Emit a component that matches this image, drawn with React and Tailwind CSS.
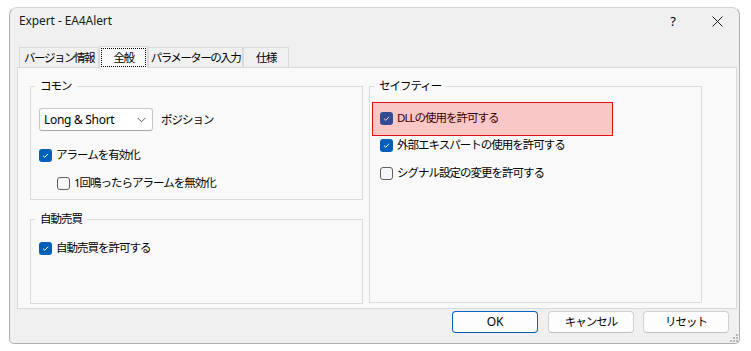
import React from "react";

const FONT = "font-['Noto_Sans','Noto_Sans_CJK_JP',sans-serif] tracking-[-1px]";

function Check({ checked }) {
  if (checked) {
    return (
      <span className="w-[13px] h-[13px] rounded-[3px] bg-[#005fb8] flex items-center justify-center shrink-0">
        <svg width="9" height="9" viewBox="0 0 9 9">
          <path d="M2 4.6 L3.8 6.3 L7 2.8" stroke="white" strokeWidth="1" fill="none" />
        </svg>
      </span>
    );
  }
  return <span className="w-[13px] h-[13px] rounded-[3px] border border-[#5f5f5f] bg-[#f7f7f7] shrink-0" />;
}

function Row({ checked, children, className = "" }) {
  return (
    <div className={"flex items-center h-[16px] gap-[4px] " + className}>
      <Check checked={checked} />
      <span className="leading-[16px] whitespace-nowrap">{children}</span>
    </div>
  );
}

function Tab({ children, selected, w }) {
  if (selected) {
    return (
      <div className={"relative z-10 h-[22px] -mb-px bg-[#f9f9f9] border border-b-0 border-[#d9d9d9] flex p-[1px] " + w}>
        <div className="flex-1 border border-dotted border-black flex items-center justify-center leading-[16px] whitespace-nowrap tracking-[-1.5px]">
          {children}
        </div>
      </div>
    );
  }
  return (
    <div className={"h-[20px] bg-[#f0f0f0] border border-b-0 border-[#dadada] flex items-center justify-center leading-[16px] whitespace-nowrap tracking-[-1.5px] " + w}>
      {children}
    </div>
  );
}

function Button({ children, primary }) {
  return (
    <div
      className={
        "w-[86px] h-[22px] rounded-[4px] bg-[#fdfdfd] flex items-center justify-center leading-[16px] " +
        (primary ? "border border-[#0067c0] border-b-[#0058a8]" : "border border-[#d0d0d0] border-b-[#c0c0c0]")
      }
    >
      {children}
    </div>
  );
}

export default function App() {
  return (
    <div className={"w-[751px] h-[351px] bg-white pt-[7px] pl-[9px] text-[11.5px] text-black " + FONT}>
      <div className="relative w-[731px] h-[337px] bg-[#f0f0f0] border border-[#b0b0b0] border-t-[#d4d4d4] rounded-t-[8px] rounded-b-[5px] flex flex-col">
        {/* title bar */}
        <div className="h-[26px] flex items-center justify-between pl-[9px] pr-[16px]">
          <span className="text-[12px] leading-[16px] text-[#1a1a1a] tracking-[-0.1px]">Expert - EA4Alert</span>
          <div className="flex items-center gap-[37px]">
            <span className="text-[13px] leading-[16px]">?</span>
            <svg width="11" height="11" viewBox="0 0 11 11">
              <path d="M0.5 0.5 L10.5 10.5 M10.5 0.5 L0.5 10.5" stroke="#1a1a1a" strokeWidth="1" />
            </svg>
          </div>
        </div>

        {/* tabs */}
        <div className="flex items-end h-[21px] mt-[12px] ml-[9px]">
          <Tab w="w-[80px]">バージョン情報</Tab>
          <Tab w="w-[49px]" selected>全般</Tab>
          <Tab w="w-[95px]">パラメーターの入力</Tab>
          <Tab w="w-[46px]">仕様</Tab>
        </div>

        {/* panel */}
        <div className="ml-[7px] w-[720px] h-[242px] border border-[#d9d9d9] bg-[#f9f9f9] pt-[10px] pl-[12px] flex gap-[6px]">
          <div className="flex flex-col gap-[11px]">
            <fieldset className="w-[333px] h-[122px] border border-[#dcdcdc] min-w-0">
              <legend className="ml-[4px] px-[5px] leading-[16px]">コモン</legend>
              <div className="pl-[8px] pt-[14px] flex flex-col">
                <div className="flex items-center gap-[8px]">
                  <div className="w-[114px] h-[23px] bg-white border border-[#c8c8c8] border-b-[#a8a8a8] rounded-[3px] flex items-center justify-between pl-[4px] pr-[6px]">
                    <span className="text-[12px] leading-[16px] tracking-[-0.3px]">Long &amp; Short</span>
                    <svg width="9" height="6" viewBox="0 0 9 6">
                      <path d="M0.5 0.8 L4.5 4.8 L8.5 0.8" stroke="#606060" strokeWidth="1" fill="none" />
                    </svg>
                  </div>
                  <span className="leading-[16px]">ポジション</span>
                </div>
                <Row checked className="mt-[16px]">アラームを有効化</Row>
                <Row className="mt-[12px] ml-[18px]">1回鳴ったらアラームを無効化</Row>
              </div>
            </fieldset>
            <fieldset className="w-[333px] h-[93px] border border-[#dcdcdc] min-w-0">
              <legend className="ml-[4px] px-[5px] leading-[16px]">自動売買</legend>
              <div className="pl-[8px] pt-[13px]">
                <Row checked>自動売買を許可する</Row>
              </div>
            </fieldset>
          </div>

          <fieldset className="relative w-[333px] h-[225px] border border-[#dcdcdc] min-w-0">
            <legend className="ml-[4px] px-[5px] leading-[16px]">セイフティー</legend>
            <div className="pl-[10px] pt-[16px] flex flex-col">
              <Row checked>DLLの使用を許可する</Row>
              <Row checked className="mt-[11px]">外部エキスパートの使用を許可する</Row>
              <Row className="mt-[12px]">シグナル設定の変更を許可する</Row>
            </div>
            <div className="absolute left-[2px] top-[8px] w-[241px] h-[34px] bg-[rgba(255,0,0,0.2)] border-[1.5px] border-[#e01010]" />
          </fieldset>
        </div>

        {/* buttons */}
        <div className="flex justify-end mt-[2px] pr-[10px]">
          <Button primary>
            <span className="text-[12px] tracking-[-0.1px]">OK</span>
          </Button>
          <div className="ml-[10px]">
            <Button>キャンセル</Button>
          </div>
          <div className="ml-[9px]">
            <Button>リセット</Button>
          </div>
        </div>

        {/* resize grip */}
        <svg className="absolute right-[1px] bottom-[1px]" width="10" height="10" viewBox="0 0 10 10">
          <rect x="8" y="2" width="2" height="2" fill="#b8b8b8" />
          <rect x="5" y="5" width="2" height="2" fill="#b8b8b8" />
          <rect x="8" y="5" width="2" height="2" fill="#b8b8b8" />
          <rect x="2" y="8" width="2" height="2" fill="#b8b8b8" />
          <rect x="5" y="8" width="2" height="2" fill="#b8b8b8" />
          <rect x="8" y="8" width="2" height="2" fill="#b8b8b8" />
        </svg>
      </div>
    </div>
  );
}
